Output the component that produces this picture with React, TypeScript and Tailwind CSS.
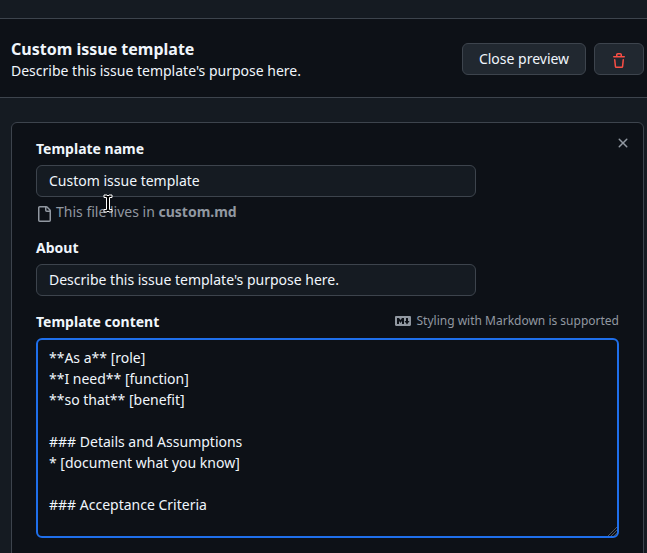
import React from "react";

function Icon({ d, className }: { d: string; className: string }) {
  return (
    <svg viewBox="0 0 16 16" width="16" height="16" fill="currentColor" className={className} aria-hidden="true">
      <path fillRule="evenodd" d={d} />
    </svg>
  );
}

const TRASH =
  "M11 1.75V3h2.25a.75.75 0 0 1 0 1.5H2.75a.75.75 0 0 1 0-1.5H5V1.75C5 .784 5.784 0 6.75 0h2.5C10.216 0 11 .784 11 1.75ZM4.496 6.675l.66 6.6a.25.25 0 0 0 .249.225h5.19a.25.25 0 0 0 .249-.225l.66-6.6a.75.75 0 0 1 1.492.149l-.66 6.6A1.748 1.748 0 0 1 10.595 15h-5.19a1.75 1.75 0 0 1-1.741-1.575l-.66-6.6a.75.75 0 1 1 1.492-.15ZM6.5 1.75V3h3V1.75a.25.25 0 0 0-.25-.25h-2.5a.25.25 0 0 0-.25.25Z";
const FILE =
  "M2 1.75C2 .784 2.784 0 3.75 0h6.586c.464 0 .909.184 1.237.513l2.914 2.914c.329.328.513.773.513 1.237v9.586A1.75 1.75 0 0 1 13.25 16h-9.5A1.75 1.75 0 0 1 2 14.25Zm1.75-.25a.25.25 0 0 0-.25.25v12.5c0 .138.112.25.25.25h9.5a.25.25 0 0 0 .25-.25V6h-2.75A1.75 1.75 0 0 1 9 4.25V1.5Zm6.75.062V4.25c0 .138.112.25.25.25h2.688l-.011-.013-2.914-2.914-.013-.011Z";
const CLOSE =
  "M3.72 3.72a.75.75 0 0 1 1.06 0L8 6.94l3.22-3.22a.749.749 0 0 1 1.275.326.749.749 0 0 1-.215.734L9.06 8l3.22 3.22a.749.749 0 0 1-.326 1.275.749.749 0 0 1-.734-.215L8 9.06l-3.22 3.22a.751.751 0 0 1-1.042-.018.751.751 0 0 1-.018-1.042L6.94 8 3.72 4.78a.75.75 0 0 1 0-1.06Z";
const MARKDOWN =
  "M14.85 3c.63 0 1.15.52 1.14 1.15v7.7c0 .63-.51 1.15-1.15 1.15H1.15C.52 13 0 12.48 0 11.84V4.15C0 3.52.52 3 1.15 3ZM9 11V5H7L5.5 7 4 5H2v6h2V8l1.5 1.92L7 8v3Zm2.99.5L14.5 8H13V5h-2v3H9.5Z";

const CONTENT = `**As a** [role]
**I need** [function]
**so that** [benefit]

### Details and Assumptions
* [document what you know]

### Acceptance Criteria
`;

const field =
  "block h-8 w-[440px] rounded-md border border-[#3d444d] bg-[#151b22] px-3 pb-0.5 text-sm leading-5 text-[#f0f6fc] outline-none";

export default function App() {
  return (
    <div className="relative h-[553px] w-[647px] overflow-hidden bg-[#151b22] pt-[18px] font-['Noto_Sans',sans-serif] text-sm leading-[21px] text-[#f0f6fc]">
      <header className="flex h-20 items-center justify-between border-y border-[#3d444d] bg-[#0d1117] pr-[3px] pl-[11px]">
        <div className="pt-0.5">
          <h1 className="text-base leading-6 font-bold">Custom issue template</h1>
          <p className="-mt-px mb-px leading-[21px]">Describe this issue template's purpose here.</p>
        </div>
        <div className="flex gap-2 pt-0.5">
          <button className="h-8 w-[124px] rounded-md border border-[#3d444d] bg-[#212830] leading-5">Close preview</button>
          <button className="flex h-8 w-[50px] items-center justify-center rounded-md border border-[#3d444d] bg-[#212830]">
            <Icon d={TRASH} className="mt-1 text-[#fa4e45]" />
          </button>
        </div>
      </header>

      <section className="mt-6 mr-[3px] ml-[11px] h-[460px] rounded-md border border-[#3d444d] bg-[#0d1117] pr-6 pl-6">
        <div className="flex items-start justify-between pt-[15px]">
          <label className="block h-[27px] font-bold">Template name</label>
          <Icon d={CLOSE} className="-mt-[3px] -mr-3 text-[#9198a1]" />
        </div>
        <input className={field} readOnly value="Custom issue template" />
        <div className="flex h-[25px] items-start pt-1 text-[#9198a1]">
          <Icon d={FILE} className="mt-[5px] mr-1" />
          <p>
            This file lives in <strong className="font-bold">custom.md</strong>
          </p>
        </div>
        <label className="mt-[15px] block h-[27px] font-bold">About</label>
        <input className={field} readOnly value="Describe this issue template's purpose here." />
        <div className="mt-[15px] flex h-[27px] items-start justify-between">
          <label className="font-bold">Template content</label>
          <div className="mt-px flex items-center text-xs leading-[18px] text-[#9198a1]">
            <Icon d={MARKDOWN} className="mr-1.5" />
            Styling with Markdown is supported
          </div>
        </div>
        <div className="relative h-[200px] w-[583px] rounded-md border-2 border-[#1f6feb] px-[11px] py-[7px] whitespace-pre">
          {CONTENT}
          <svg className="absolute -right-px -bottom-px" width="11" height="11" stroke="#50555b" aria-hidden="true">
            <path d="M1 10 10 1M4 10 10 4M7 10 10 7" />
          </svg>
        </div>
      </section>

      <svg className="absolute top-[194px] left-[103px]" width="10" height="19" viewBox="0 0 10 19" aria-hidden="true">
        <path d="M1 1h3l1 1 1-1h3v2.500H6.500v12H9V18H6l-1-1-1 1H1v-2.500h2.500v-12H1z" fill="#000" stroke="#fff" strokeWidth="1" />
      </svg>
    </div>
  );
}
